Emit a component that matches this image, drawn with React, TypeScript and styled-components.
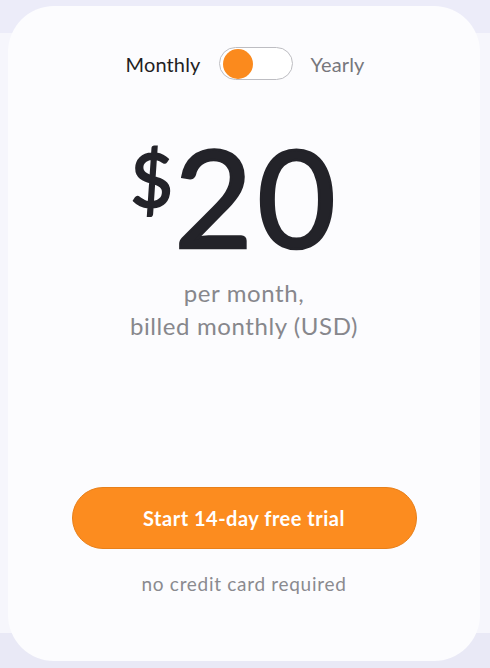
import React, { useState } from 'react';
import styled, { createGlobalStyle } from 'styled-components';

const GlobalStyle = createGlobalStyle`
  html, body {
    margin: 0;
    padding: 0;
  }

  body {
    width: 490px;
    height: 668px;
    overflow: hidden;
    font-family: Lato, "Noto Sans", sans-serif;
    background: linear-gradient(
      to bottom,
      #ececf9 0,
      #ececf9 33px,
      #f6f6fc 33px,
      #f6f6fc 633px,
      #e9e9f6 633px
    );
  }
`;

const Page = styled.div`
  padding: 6px 10px 7px 8px;
  box-sizing: border-box;
  height: 668px;
`;

const Card = styled.div`
  height: 655px;
  box-sizing: border-box;
  background: #fcfcfe;
  border-radius: 46px;
  padding: 41px 0 0;
  display: flex;
  flex-direction: column;
  align-items: center;
`;

const ToggleRow = styled.div`
  display: flex;
  align-items: center;
  gap: 18px;
  height: 33px;
  margin-left: 2px;
`;

const PeriodLabel = styled.span<{ $active: boolean }>`
  font-size: 20px;
  letter-spacing: 0.15px;
  color: ${p => (p.$active ? '#1f1f24' : '#77777c')};
  cursor: pointer;
`;

const Switch = styled.button<{ $on: boolean }>`
  width: 74px;
  height: 33px;
  padding: 0 2px;
  box-sizing: border-box;
  border: 1px solid #bdbdc2;
  border-radius: 17px;
  background: #ffffff;
  display: flex;
  align-items: center;
  justify-content: ${p => (p.$on ? 'flex-end' : 'flex-start')};
  cursor: pointer;
`;

const Knob = styled.span`
  width: 30px;
  height: 30px;
  border-radius: 50%;
  background: #fb8a1d;
  margin-left: 1px;
`;

const Price = styled.div`
  display: flex;
  align-items: flex-start;
  margin-top: 48px;
  color: #232329;
  margin-right: 18px;
`;

const Currency = styled.span`
  font-size: 74px;
  line-height: 1;
  margin-top: 14px;
  margin-right: 1px;
  -webkit-text-stroke: 2px #232329;
`;

const Amount = styled.span`
  font-size: 136px;
  line-height: 1;
  letter-spacing: 4px;
  -webkit-text-stroke: 2.5px #232329;
`;

const Billing = styled.div`
  margin-top: 12px;
  font-size: 24px;
  letter-spacing: 0.6px;
  line-height: 33px;
  color: #87878c;
  text-align: center;
`;

const Actions = styled.div`
  margin-top: auto;
  margin-bottom: 66px;
  display: flex;
  flex-direction: column;
  align-items: center;
`;

const TrialButton = styled.button`
  width: 345px;
  height: 62px;
  border-radius: 31px;
  border: 1px solid #e8801a;
  background: #fc8c1f;
  color: #ffffff;
  font-family: Lato, "Noto Sans", sans-serif;
  font-weight: 700;
  font-size: 20px;
  letter-spacing: 0.5px;
  cursor: pointer;
`;

const Note = styled.div`
  margin-top: 23px;
  font-size: 19px;
  letter-spacing: 0.7px;
  color: #8a8a8f;
`;

export default function App() {
  const [yearly, setYearly] = useState(false);

  return (
    <>
      <GlobalStyle />
      <Page>
        <Card>
          <ToggleRow>
            <PeriodLabel $active={!yearly} onClick={() => setYearly(false)}>
              Monthly
            </PeriodLabel>
            <Switch $on={yearly} onClick={() => setYearly(v => !v)} aria-label="Billing period">
              <Knob />
            </Switch>
            <PeriodLabel $active={yearly} onClick={() => setYearly(true)}>
              Yearly
            </PeriodLabel>
          </ToggleRow>
          <Price>
            <Currency>$</Currency>
            <Amount>{yearly ? '16' : '20'}</Amount>
          </Price>
          <Billing>
            per month,
            <br />
            {yearly ? 'billed yearly (USD)' : 'billed monthly (USD)'}
          </Billing>
          <Actions>
            <TrialButton>Start 14-day free trial</TrialButton>
            <Note>no credit card required</Note>
          </Actions>
        </Card>
      </Page>
    </>
  );
}
